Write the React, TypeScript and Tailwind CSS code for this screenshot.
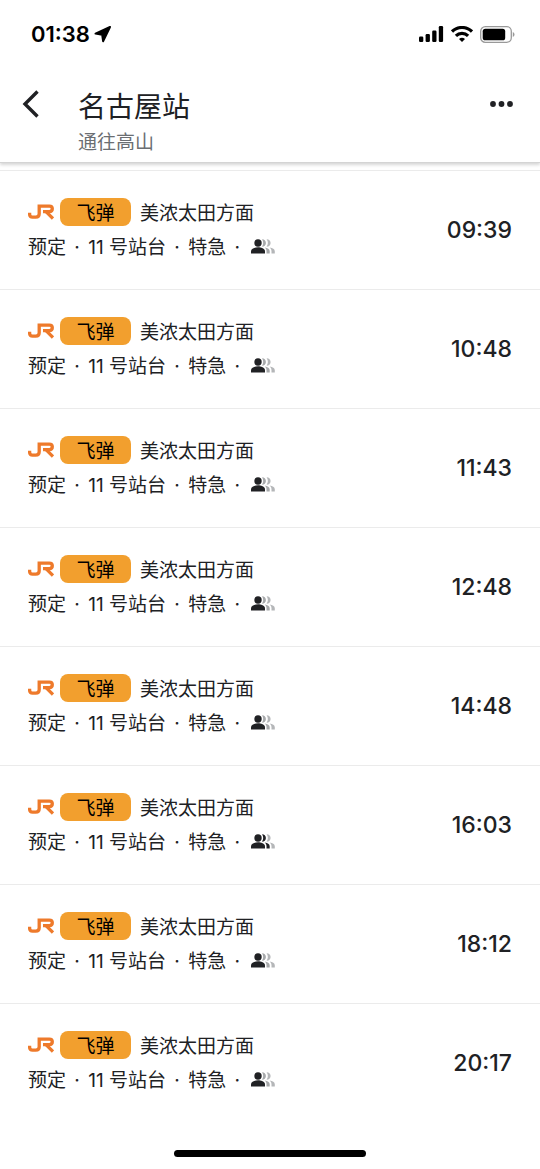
import React from 'react';

interface Departure {
  time: string;
  crowd: 'light' | 'busy';
}

const departures: Departure[] = [
  { time: '09:39', crowd: 'light' },
  { time: '10:48', crowd: 'light' },
  { time: '11:43', crowd: 'light' },
  { time: '12:48', crowd: 'light' },
  { time: '14:48', crowd: 'light' },
  { time: '16:03', crowd: 'busy' },
  { time: '18:12', crowd: 'light' },
  { time: '20:17', crowd: 'light' },
];

function StatusBar() {
  return (
    <div className="flex h-[68px] items-center justify-between pr-[25px] pl-[31px] text-black">
      <div className="flex items-center gap-1">
        <span className="text-[22px] leading-7 font-semibold">01:38</span>
        <svg className="h-[18px] w-[18px]" viewBox="0 0 18 18" fill="currentColor" stroke="currentColor" strokeWidth="2" strokeLinejoin="round">
          <path d="M16 2 1.500 8.600l6.700 1.200.9 6.400Z" />
        </svg>
      </div>
      <div className="flex items-center gap-[7px]">
        <svg className="h-4 w-[25px]" viewBox="0 0 25 16" fill="currentColor">
          <rect x="0" y="10.500" width="4.300" height="5.500" rx="1.200" />
          <rect x="6.600" y="8" width="4.300" height="8" rx="1.200" />
          <rect x="13.200" y="4.500" width="4.300" height="11.500" rx="1.200" />
          <rect x="19.800" y="0" width="4.300" height="16" rx="1.200" />
        </svg>
        <svg className="h-4 w-[22px]" viewBox="0 0 22 16" fill="none" stroke="currentColor" strokeWidth="3.200">
          <path d="M1 5.600a14.200 14.200 0 0 1 20 0" />
          <path d="M4.900 9.800a8.700 8.700 0 0 1 12.200 0" />
          <path d="m11 16-3-3a4.600 4.600 0 0 1 6 0Z" fill="currentColor" stroke="none" />
        </svg>
        <svg className="h-[17px] w-[35px]" viewBox="0 0 35 17">
          <rect x="0.700" y="0.700" width="30.600" height="15.600" rx="4.600" fill="none" stroke="#999" strokeWidth="1.300" />
          <rect x="2.700" y="2.700" width="22.500" height="11.600" rx="2.600" fill="#000" />
          <path d="M32.800 6v5c1-.4 1.700-1.400 1.700-2.500S33.800 6.400 32.800 6Z" fill="#999" />
        </svg>
      </div>
    </div>
  );
}

function JrLogo() {
  return (
    <svg className="h-4 w-[26px]" viewBox="0 0 26 16" fill="none" stroke="#ee7a2b" strokeWidth="3.300" role="img" aria-label="JR">
      <path d="M1.600 8.800v1.400c0 2 .9 2.900 2.900 2.900h3.300c2.300 0 3.400-1.100 3.400-3.300V2.100h10.200c1.900 0 2.900.8 2.900 2.700s-1 2.800-2.900 2.800h-4.200" />
      <path d="M15 7.600h3l7 6.900" />
    </svg>
  );
}

function CrowdIcon({ crowd }: { crowd: Departure['crowd'] }) {
  const second = crowd === 'busy' ? '#202124' : '#a6a8aa';
  return (
    <svg className="mb-1 h-[15px] w-6" viewBox="0 0 24 15">
      <circle cx="7" cy="4" r="3.700" fill="#202124" />
      <path d="M0 14.500v-2.300C0 9.700 4.200 8.300 7 8.300s7 1.400 7 3.900v2.300Z" fill="#202124" />
      <path d="M11 .3c2.300 0 3.900 1.600 3.900 3.700S13.300 7.700 11 7.700c1.600-2.300 1.600-5.100 0-7.400Z" fill={second} />
      <path d="M13.700 8.600c2.900.5 5 1.700 5 3.600v2.300h-3.200v-2.300c0-1.500-.7-2.700-1.800-3.600Z" fill={second} />
      <path d="M15.600.3c2.300 0 4 1.600 4 3.700s-1.700 3.700-4 3.700c1.700-2.300 1.700-5.100 0-7.400Z" fill="#b4b6b8" />
      <path d="M18.600 8.600c3 .5 5.200 1.700 5.200 3.600v2.300h-3.300v-2.300c0-1.500-.8-2.700-1.900-3.600Z" fill="#b4b6b8" />
    </svg>
  );
}

function Dot() {
  return <span className="mx-[3px]">·</span>;
}

export default function App() {
  return (
    <div className="min-h-screen bg-white font-['Inter','Noto_Sans_CJK_SC',sans-serif] text-[#202124]">
      <header className="border-b border-[#d4d4d4] shadow-[0_2px_3px_rgba(0,0,0,0.16)]">
        <StatusBar />
        <div className="flex items-start pt-[21px] pr-[27px] pb-[5px] pl-[22px]">
          <button type="button" aria-label="返回" className="flex h-[30px] w-14 items-center">
            <svg className="h-7 w-[18px]" viewBox="0 0 18 28" fill="none" stroke="currentColor" strokeWidth="3.400">
              <path d="M15.500 1.500 3 14l12.500 12.500" />
            </svg>
          </button>
          <div className="flex-1">
            <h1 className="text-[28px] leading-9">名古屋站</h1>
            <p className="mt-1 text-[19px] leading-7 text-[#6b6e72]">通往高山</p>
          </div>
          <button type="button" aria-label="更多" className="flex h-[30px] items-center">
            <svg className="h-[6px] w-[23px]" viewBox="0 0 23 6" fill="currentColor">
              <circle cx="3" cy="3" r="2.900" />
              <circle cx="11.500" cy="3" r="2.900" />
              <circle cx="20" cy="3" r="2.900" />
            </svg>
          </button>
        </div>
      </header>

      <ul className="pt-[7px]">
        {departures.map((departure) => (
          <li
            key={departure.time}
            className="flex items-center justify-between border-t border-[#ebebeb] py-[27px] pr-7 pl-7 text-[19px] leading-7"
          >
            <div className="flex flex-col gap-2">
              <div className="flex items-center leading-6">
                <JrLogo />
                <span className="ml-[6px] w-[71px] rounded-lg bg-[#f29f2e] pt-1 text-center text-black">飞弹</span>
                <span className="ml-[9px] pt-1">美浓太田方面</span>
              </div>
              <div className="flex items-center gap-2">
                <span>
                  预定 <Dot /> 11 号站台 <Dot /> 特急 <Dot />
                </span>
                <CrowdIcon crowd={departure.crowd} />
              </div>
            </div>
            <time className="text-[23px] font-medium">{departure.time}</time>
          </li>
        ))}
      </ul>

      <div className="flex justify-center pt-7 pb-[11px]">
        <div className="h-[7px] w-48 rounded-full bg-black" />
      </div>
    </div>
  );
}
